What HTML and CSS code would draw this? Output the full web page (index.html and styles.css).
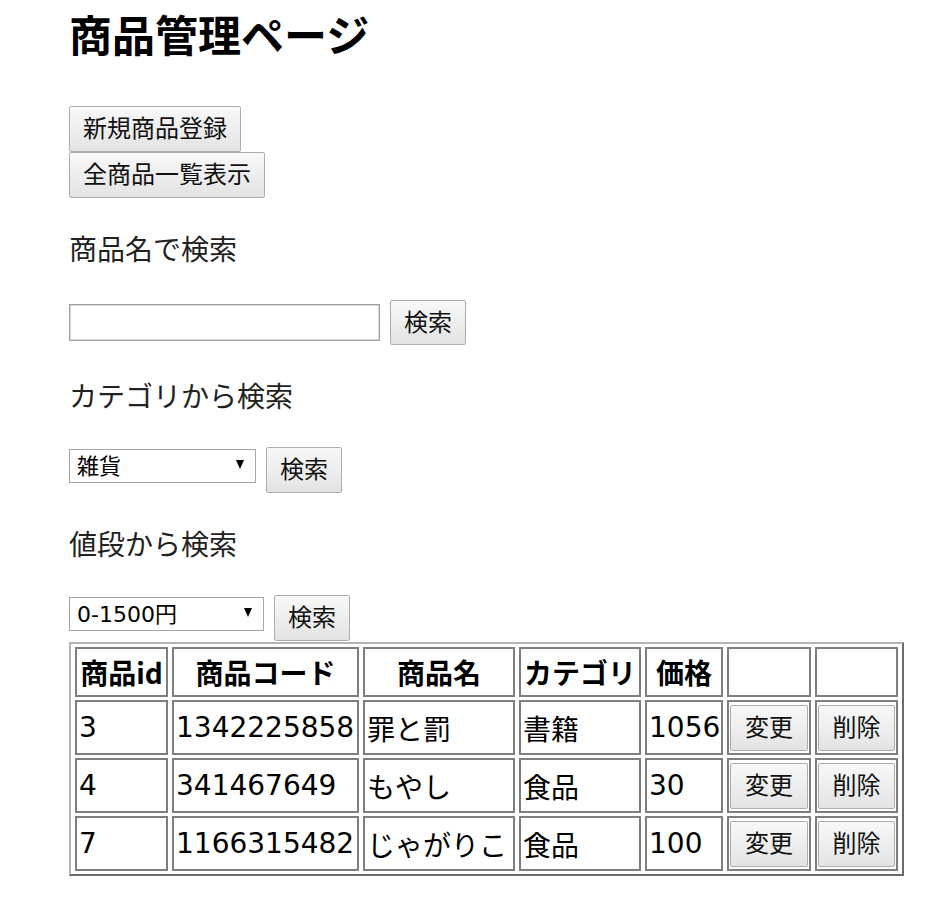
FILE: index.html
```html
<!DOCTYPE html>
<html lang="ja">
<head>
<meta charset="utf-8">
<title>商品管理ページ</title>
<link rel="stylesheet" href="styles.css">
</head>
<body>
<div class="page">
  <h1 class="title">商品管理ページ</h1>
  <div class="actions">
    <button class="btn">新規商品登録</button>
    <button class="btn">全商品一覧表示</button>
  </div>

  <p class="label">商品名で検索</p>
  <div class="search-row">
    <input class="text-input" type="text">
    <button class="btn">検索</button>
  </div>

  <p class="label">カテゴリから検索</p>
  <div class="search-row select-row">
    <span class="select-wrap"><select class="select sel-cat"><option>雑貨</option><option>書籍</option><option>食品</option></select></span>
    <button class="btn btn-tall">検索</button>
  </div>

  <p class="label">値段から検索</p>
  <div class="search-row select-row">
    <span class="select-wrap"><select class="select sel-price"><option>0-1500円</option></select></span>
    <button class="btn btn-tall">検索</button>
  </div>

  <table class="products">
    <thead>
      <tr>
        <th class="c-id">商品id</th>
        <th class="c-code">商品コード</th>
        <th class="c-name">商品名</th>
        <th class="c-cat">カテゴリ</th>
        <th class="c-price">価格</th>
        <th class="c-edit"></th>
        <th class="c-del"></th>
      </tr>
    </thead>
    <tbody>
      <tr>
        <td>3</td><td>1342225858</td><td>罪と罰</td><td>書籍</td><td>1056</td>
        <td class="act"><button class="btn btn-cell">変更</button></td>
        <td class="act"><button class="btn btn-cell">削除</button></td>
      </tr>
      <tr>
        <td>4</td><td>341467649</td><td>もやし</td><td>食品</td><td>30</td>
        <td class="act"><button class="btn btn-cell">変更</button></td>
        <td class="act"><button class="btn btn-cell">削除</button></td>
      </tr>
      <tr>
        <td>7</td><td>1166315482</td><td>じゃがりこ</td><td>食品</td><td>100</td>
        <td class="act"><button class="btn btn-cell">変更</button></td>
        <td class="act"><button class="btn btn-cell">削除</button></td>
      </tr>
    </tbody>
  </table>
</div>
</body>
</html>
```

FILE: styles.css
```css
body {
  margin: 0;
  background: #fff;
  color: #000;
  font-family: "DejaVu Sans", "Noto Sans CJK JP", sans-serif;
}

.page {
  padding-left: 69px;
}

.title {
  margin: 0;
  font-family: "Noto Sans CJK JP", sans-serif;
  font-size: 43px;
  line-height: 66px;
  font-weight: 700;
  color: #000;
}

.actions {
  display: flex;
  flex-direction: column;
  align-items: flex-start;
  margin-top: 40px;
}

.btn {
  font-family: "DejaVu Sans", "Noto Sans CJK JP", sans-serif;
  font-size: 24px;
  line-height: 1;
  height: 45px;
  padding: 0 13px;
  border: 1px solid #adadad;
  border-radius: 2px;
  background: linear-gradient(#f8f8f8, #e3e3e3);
  color: #111;
  box-sizing: border-box;
}

.actions .btn {
  height: 46px;
}

.label {
  margin: 30px 0 0;
  font-family: "Noto Sans CJK JP", sans-serif;
  font-size: 28px;
  line-height: 40px;
  color: #222;
}

.search-row {
  display: flex;
  align-items: center;
  gap: 10px;
  margin-top: 32px;
}

.select-row {
  align-items: flex-start;
}

.text-input {
  width: 311px;
  height: 37px;
  box-sizing: border-box;
  border: 1px solid #a0a0a0;
  box-shadow: inset 0 0 0 1px #d8d8d8;
  margin: 0;
  padding: 0 4px;
  font-size: 22px;
}

.btn-tall {
  height: 46px;
}

.select-wrap {
  position: relative;
  display: block;
  margin-top: 2px;
}

.select-wrap::after {
  content: "";
  position: absolute;
  right: 12px;
  top: 11px;
  border-left: 4px solid transparent;
  border-right: 4px solid transparent;
  border-top: 9px solid #000;
  pointer-events: none;
}

.select {
  -webkit-appearance: none;
  appearance: none;
  display: block;
  height: 34px;
  box-sizing: border-box;
  border: 1px solid #a6a6a6;
  border-radius: 0;
  background: #fff;
  color: #000;
  margin: 0;
  padding: 0 0 0 7px;
  font-family: "DejaVu Sans", "Noto Sans CJK JP", sans-serif;
  font-size: 22px;
}

.sel-cat {
  width: 187px;
}

.sel-price {
  width: 195px;
}

.products {
  margin-top: 1px;
  width: 835px;
  table-layout: fixed;
  border-collapse: separate;
  border-spacing: 4px 3px;
  border: 2px solid;
  border-color: #b4b4b4 #6a6a6a #6a6a6a #b4b4b4;
  font-size: 28px;
}

.products th,
.products td {
  box-sizing: border-box;
  border: 2px solid #7e7e7e;
  padding: 0 2px;
  white-space: nowrap;
  overflow: hidden;
}

.products th {
  height: 50px;
  font-family: "Noto Sans CJK JP", sans-serif;
  font-weight: 700;
  text-align: center;
}

.products td {
  height: 55px;
  text-align: left;
}

.products td.act {
  padding: 1px;
}

.c-id { width: 93px; }
.c-code { width: 187px; }
.c-name { width: 152px; }
.c-cat { width: 122px; }
.c-price { width: 78px; }
.c-edit { width: 84px; }
.c-del { width: 83px; }

.btn-cell {
  display: block;
  width: 100%;
  height: 46px;
  padding: 0;
}
```
